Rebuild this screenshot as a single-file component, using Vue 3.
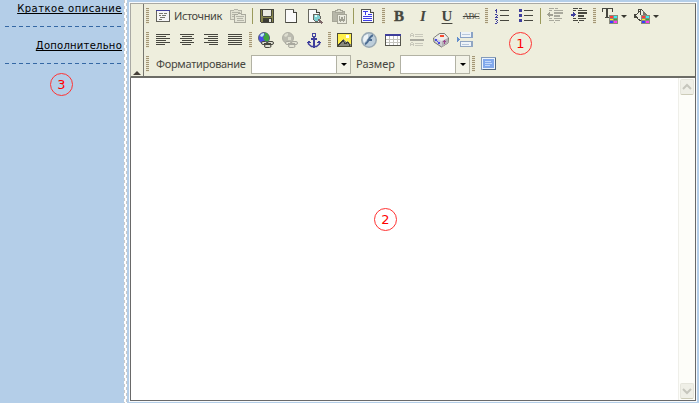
<script setup>
const ink = '#47473f'
const navy = '#3f3f9c'
const pale = '#b4b4a8'

// Each shape is [path data, fill, stroke, stroke width, smooth]
const palette = [
  ['M7 7h9v9h-9z', '#8b8b7d'],
  ['M8 8h3v2h-3z', '#ff3838'], ['M12 8h3v2h-3z', '#35eeee'],
  ['M8 11h3v1h-3z', '#ffed27'], ['M12 11h3v1h-3z', '#38a838'],
  ['M8 13h3v2h-3z', '#3b3bff'], ['M12 13h3v2h-3z', '#ff38ee'],
]

const icons = {
  source: [
    ['M1.5 2.5h13v11h-13z', '#f5f5f6', '#62625a'], ['M1 2.5h14', 'none', navy],
    ['M4 5.5h4M9 5.5h3M4 7.5h2M7 7.5h4M5 9.5h5M4 11.5h3', 'none', '#77776e'],
  ],
  templates: [
    ['M.5 2.5h3l1-1h3l1 1h3v9h-11z', '#e1e1d2', pale], ['M2 4.5h8M2 6.5h3M2 8.5h2', 'none', pale],
    ['M4.5 6.5h3l1-1h2l1 1h4v8h-11z', '#e5e5d7', '#a9a99d'], ['M6 8.5h8M7 10.5h6M7 12.5h7', 'none', pale],
  ],
  save: [
    ['M1.5 1.5h13v13h-12l-1-1z', '#84844b', ink], ['M4 2h8v6h-8z', '#e8e8df'],
    ['M3.5 2v6M12.5 2v6M4 8.5h8', 'none', ink], ['M4 10h9v4h-9z', '#3c3c35'], ['M10 11h2v3h-2z', '#e5e5da'],
  ],
  page: [['M2.5 1.5h8l3 3v10h-11z', '#fafafa', '#67675f'], ['M10.5 1.5v3h3', '#ddd', ink], ['M13.5 5v10M3 14.5h11', 'none', ink]],
  preview: [
    ['M1.5 1.5h8l3 3v10h-11z', '#fafafa', '#67675f'], ['M9.5 1.5v3h3', '#ddd', ink],
    ['M7 6h4l2 2v3l-2 2h-3l-2-2v-3z', '#80cfd1', '#686861'], ['M8 7h2v2h-2z', '#d9ffff'], ['M11.5 11.5l4 4', 'none', '#7d6869', 2],
  ],
  word: [
    ['M1.5 3.5h12v10h-12z', '#b6b6a8', '#a6a698'], ['M4.5 4.5v-2h2v-1h3v1h2v2z', '#dadacb', '#a6a698'],
    ['M6.5 6.5h9v9h-9z', '#ebebdf', '#a6a698'], ['M8.5 8v4l1 1 1.5-3 1.5 3 1-1v-4', 'none', '#a0a093', 1.5],
  ],
  document: [
    ['M1.5 1.5h9l3 3v10h-12z', '#fafaff', '#55554e'], ['M10.5 1.5v3h3', '#ddd', ink],
    ['M3 3.5h5M5.5 3v4M3 8.5h9M3 10.5h9M3 12.5h9', 'none', '#3d3de6'], ['M8 6.5h4', 'none', '#3d3de6'],
  ],
  ol: [
    ['M2 1h1v4h-1zM1 2h1v1h-1zM1 6h2v1h-2zM3 7h1v1h-1zM2 8h1v1h-1zM1 9h3v1h-3zM1 11h2v1h-2zM3 12h1v1h-1zM2 13h1v1h-1zM3 14h1v1h-1zM1 15h2v1h-2z', navy],
    ['M6 2.5h9M6 7.5h9M6 12.5h9', 'none', ink],
  ],
  ul: [['M1 1h3v3h-3zM1 6h3v3h-3zM1 11h3v3h-3z', navy], ['M6 2.5h9M6 7.5h9M6 12.5h9', 'none', ink]],
  outdent: [
    ['M2 .5h5M8 .5h3M2 2.5h3M7 2.5h9M2 10.5h3M7 10.5h8M2 12.5h5M8 12.5h5M7 14.5h1', 'none', '#a9a99d'],
    ['M7 4h9v2h-9zM7 7h6v2h-6z', '#a9a99d'], ['M0 6.5l3-3v2h3v2h-3v2z', '#a0a094'],
  ],
  indent: [
    ['M2 .5h5M8 .5h3M2 2.5h3M7 2.5h9M2 10.5h3M7 10.5h8M2 12.5h5M8 12.5h5M7 14.5h1', 'none', ink],
    ['M7 4h9v2h-9zM7 7h6v2h-6z', ink], ['M5 6.5l-3-3v2h-2v2h2v2z', navy],
  ],
  textColor: [['M.5 4v-3.5h10v3.5M5.5 1v9M3 9.5h5', 'none', ink], ['M4 1h2v9h-2z', ink], ...palette],
  bgColor: [
    ['M1.5 7.5l6-6 5 5-6 6-2-1z', '#eeeedf', ink], ['M4.5 4v-3h2v6', 'none', ink],
    ['M9 3l4 4-4 2z', '#75756c'], ['M0 6h2v4h-2z', ink], ...palette,
  ],
  left: [['M1 2.5h14M1 4.5h10M1 6.5h14M1 8.5h10M1 10.5h14M1 12.5h9', 'none', ink]],
  center: [['M1 2.5h14M3 4.5h10M1 6.5h14M3 8.5h10M1 10.5h14M3 12.5h9', 'none', ink]],
  right: [['M1 2.5h14M5 4.5h10M1 6.5h14M5 8.5h10M1 10.5h14M6 12.5h9', 'none', ink]],
  justify: [['M1 2.5h14M1 4.5h14M1 6.5h14M1 8.5h14M1 10.5h14M1 12.5h14', 'none', ink]],
  link: [
    ['M6 .5a5.5 5.5 0 100 11a5.5 5.5 0 100-11z', '#4b4bea', '#55627e', 1, true],
    ['M6 1h3l2 3v4l-2 2-3-2-1-3 2-2z', '#3fa63e', 'none', 1, true], ['M3 2l3-1v2l-2 2-2-1z', '#bdeef1', 'none', 1, true],
    ['M5 9.5h2.500a1.500 1.500 0 010 3h-2.500a1.500 1.500 0 010-3zM11 9.5h3a1.500 1.500 0 010 3h-3a1.500 1.500 0 010-3zM8 12.500h3.500a1.500 1.500 0 010 3h-3.500a1.500 1.500 0 010-3z', '#deded2', ink, 1, true], ['M6 11.500h7', 'none', ink],
  ],
  unlink: [
    ['M6 .5a5.5 5.5 0 100 11a5.5 5.5 0 100-11z', '#bcbcb1', '#b0b0a5', 1, true],
    ['M3 2l3-1v2l-2 2-2-1zM6 5h3v3h-3z', '#ddddcf', 'none', 1, true],
    ['M5 9.5h2.500a1.500 1.500 0 010 3h-2.500a1.500 1.500 0 010-3zM11 9.5h3a1.500 1.500 0 010 3h-3a1.500 1.500 0 010-3zM8 12.500h3.500a1.500 1.500 0 010 3h-3.500a1.500 1.500 0 010-3z', '#e5e5d7', '#a9a99f', 1, true], ['M6 11.500h7', 'none', '#a9a99f'],
  ],
  anchor: [
    ['M6.500 1.500h3v3h-3z', 'none', '#4545a0'], ['M8 5v9M5 6.5h6', 'none', navy, 2],
    ['M2.500 10v2l3 2.500h5l3-2.500v-2', 'none', navy, 1.5, true],
    ['M1 11l2-3 2 3zM11 11l2-3 2 3zM7 14h2v2h-2z', navy],
  ],
  image: [
    ['M.5 1.5h14v13h-14z', '#fff04c', '#4c4b36'], ['M9 3h3v3h-3z', '#fff'], ['M1 13l5-6 3 3 2-1 3 4v1h-13z', '#88887d'],
    ['M1 13.5l5-5 2 3 3-1 2 3', 'none', '#3e3e39'],
  ],
  flash: [
    ['M8 .8a7.2 7.2 0 100 14.4a7.2 7.2 0 100-14.4z', '#bdcedb', '#98a8b3', 1.5, true],
    ['M3 4l4-2v4l-4 5-1-3z', '#edf3f7', 'none', 1, true],
    ['M12 3.500c-4 0-4.500 8-8 8.500M6.500 8h4.500', 'none', '#4c6c91', 2, true],
  ],
  table: [
    ['M.5 2.5h15v11h-15z', '#fff', '#55554d'], ['M0 3h16', 'none', navy, 2],
    ['M4.5 4v9M8.5 4v9M12.5 4v9M1 7.5h14M1 10.5h14', 'none', '#c3c3bd'],
  ],
  rule: [
    ['M1 7h14v2h-14z', '#aaaaa0'], ['M2 1.5h2M1.500 2v3M4.500 2v3M2 3.5h2M6 2.5h8M6 4.5h8M2 10.5h2M1.500 11v3M4.500 11v3M2 12.5h2M6 11.5h8M6 13.5h8', 'none', '#c8c8bb'],
  ],
  smiley: [
    ['M.5 6l6-4.500h5l4 4.500-.5 5-6.500 4-7.500-5z', '#cdced4', '#77776f', 1, true],
    ['M1 6l6-4h4l4 4-6 3z', '#ededea', 'none', 1, true], ['M9 9l6-3v5l-6 4z', '#b5b1b6', 'none', 1, true],
    ['M7 3h4v2h-4z', '#f74a2e'], ['M2 7h2v2h-2zM4 9h1v1h-1zM5 10h2v2h-2z', '#4a4ae8'], ['M11 8h1v1h1v1h-1v2h-1v-2h-1v-1h1z', '#9b438b'],
  ],
  pageBreak: [
    ['M3 0h13v6h-13z', '#8ba3c6'], ['M4 0h10v5h-10z', '#eef3f8'], ['M3 9h13v6h-13z', '#91a6c3'], ['M4 10h10v4h-10z', '#eff4f8'],
    ['M5 2.5h8M5 12.5h7', 'none', '#b8c8dc'], ['M0 4.500l3 3-3 3z', '#638ecc'],
  ],
  fit: [
    ['M.5 1.5h14v12h-14z', '#ecf4fd', '#849bba'], ['M14.5 2v11.500h-13', 'none', '#52677f'], ['M2 3h11v9h-11z', '#82a9ec'],
    ['M4 5.5h6M4 7.5h7M4 9.5h5', 'none', '#c2d8fb'],
  ],
}

const b = (icon) => ({ kind: 'button', icon })
const handle = { kind: 'handle' }
const sep = { kind: 'sep' }
const rows = [
  [handle, { kind: 'source', icon: 'source', text: 'Источник' }, b('templates'), sep, b('save'), b('page'), b('preview'), b('word'), sep, b('document'),
    handle, { kind: 'glyph', text: 'B', style: 'bold' }, { kind: 'glyph', text: 'I', style: 'italic' }, { kind: 'glyph', text: 'U', style: 'under' }, { kind: 'glyph', text: 'ABC', style: 'strike' },
    handle, b('ol'), b('ul'), sep, b('outdent'), b('indent'),
    handle, { kind: 'color', icon: 'textColor' }, { kind: 'color', icon: 'bgColor' }],
  [handle, b('left'), b('center'), b('right'), b('justify'), handle, b('link'), b('unlink'), b('anchor'),
    handle, b('image'), b('flash'), b('table'), b('rule'), b('smiley'), b('pageBreak')],
  [handle, { kind: 'select', text: 'Форматирование', style: 'format' }, { kind: 'select', text: 'Размер', style: 'size' }, handle, b('fit')],
]
</script>

<template>
  <div class="page">
    <aside class="sidebar">
      <a class="link first">Краткое описание</a>
      <a class="link second">Дополнительно</a>
      <span class="mark mark-side">3</span>
    </aside>
    <div class="splitter"></div>
    <main class="editor">
      <header class="toolbar">
        <div class="collapse"><i></i></div>
        <div class="rows">
          <div v-for="(row, n) in rows" :key="n" class="row">
            <div v-for="(item, i) in row" :key="i" class="item" :class="[item.kind, item.style]">
              <span v-if="item.text" class="label">{{ item.text }}</span>
              <svg v-if="item.icon" class="icon" width="16" height="16" viewBox="0 0 16 16">
                <path v-for="(s, k) in icons[item.icon]" :key="k" :d="s[0]" :fill="s[1]" :stroke="s[2] || 'none'"
                  :stroke-width="s[3] || 1" :shape-rendering="s[4] ? 'auto' : 'crispEdges'" />
              </svg>
              <i v-if="item.kind === 'color'" class="arrow"></i>
              <div v-if="item.kind === 'select'" class="box"><span class="drop"><i class="arrow"></i></span></div>
            </div>
          </div>
        </div>
        <span class="mark mark-tools">1</span>
      </header>
      <section class="area">
        <span class="mark mark-area">2</span>
        <div class="scroll">
          <div class="scroll-button"><svg width="10" height="8" viewBox="0 0 10 8"><path d="M1 6l4-4 4 4" /></svg></div>
          <div class="scroll-button down"><svg width="10" height="8" viewBox="0 0 10 8"><path d="M1 2l4 4 4-4" /></svg></div>
        </div>
      </section>
    </main>
  </div>
</template>

<style>
body { margin: 0; overflow: hidden; }
</style>

<style scoped>
* { box-sizing: border-box; }
.page { display: flex; width: 699px; height: 403px; background: #b4cee8; font-family: "DejaVu Sans", sans-serif; position: relative; }
.sidebar { width: 124px; padding: 0 2px 0 5px; }
.link { display: block; width: 117px; text-align: right; color: #000; text-decoration: underline; text-decoration-skip-ink: none; font-size: 10px; line-height: 14px; white-space: nowrap; background: repeating-linear-gradient(90deg, #3568a4 0 4px, transparent 4px 7px) bottom / 100% 1px no-repeat; }
.first { height: 27px; padding-top: 2px; letter-spacing: 0.5px; }
.second { height: 37px; padding-top: 12px; letter-spacing: 0.25px; }
.splitter { width: 3px; background: repeating-conic-gradient(#fff 0 25%, #c9c9c9 0 50%) 0 0 / 3px 6px; }
.editor { display: flex; flex-direction: column; width: 568px; height: 400px; margin: 2px 0 0 2px; border: 1px solid #f8fafc; }
.toolbar { display: flex; height: 75px; flex: none; background: #eeeedd; border: 1px solid #a9a9a3; border-right: 1px solid #62625e; border-bottom: 2px solid #6c6c66; }
.collapse { display: flex; width: 13px; justify-content: center; align-items: flex-end; padding-bottom: 1px; border-right: 1px solid #777770; }
.collapse i { border: 4px solid transparent; border-top: 0; border-bottom: 4px solid #47413a; }
.row { display: flex; height: 24px; }
.item { display: flex; align-items: center; flex: none; }
.button, .glyph { width: 24px; justify-content: center; }
.handle { width: 7px; justify-content: center; }
.handle::before { content: ""; width: 3px; height: 16px; background: repeating-linear-gradient(#a39676 0 1px, #e9e6cf 1px 2px); }
.sep { width: 5px; justify-content: center; }
.sep::before { content: ""; width: 1px; height: 16px; background: #9a9a5c; }
.icon { display: block; overflow: visible; }
.source { width: 75px; padding-left: 4px; gap: 3px; }
.source .label { order: 1; letter-spacing: -0.4px; }
.label { font-family: "Noto Sans", "DejaVu Sans", sans-serif; font-size: 11px; line-height: 16px; color: #47473f; white-space: nowrap; }
.glyph .label { font-family: "Liberation Serif", serif; font-size: 15px; line-height: 16px; }
.bold .label { font-weight: bold; -webkit-text-stroke: 0.4px #47473f; }
.italic .label { font-style: italic; font-weight: bold; }
.under .label { font-weight: bold; text-decoration: underline; text-underline-offset: 2px; }
.strike .label { font-size: 9px; letter-spacing: -0.7px; text-decoration: line-through; }
.color { width: 32px; padding-left: 4px; gap: 3px; }
.arrow { width: 0; height: 0; border: 3px solid transparent; border-top-color: #393932; border-bottom: 0; }
.select { gap: 5px; padding-left: 5px; }
.format { width: 200px; }
.size { width: 119px; }
.select .label { flex: 1 1 0; min-width: 0; }
.format .label { letter-spacing: -0.3px; }
.box { display: flex; flex: none; justify-content: flex-end; width: 100px; height: 19px; border: 1px solid #b2b2a4; background: #fff; }
.size .box { width: 70px; }
.drop { display: flex; align-items: center; justify-content: center; width: 14px; border-left: 1px solid #b2b2a4; background: #f3f3e8; }
.drop .arrow { border-top-color: #000; }
.area { display: flex; flex: 1; justify-content: flex-end; background: #fff; border: 1px solid #696969; border-top: 0; }
.scroll { display: flex; flex-direction: column; justify-content: space-between; width: 17px; padding: 1px; border-left: 1px solid #efefe9; background: #fdfdf9; }
.scroll-button { display: flex; align-items: center; justify-content: center; width: 14px; height: 16px; border: 1px solid #e5e5dc; border-bottom-color: #cdccb9; border-radius: 2px; background: #efefe7; }
.scroll-button path { fill: none; stroke: #c6c6bd; stroke-width: 2; }
.mark { position: absolute; display: flex; align-items: center; justify-content: center; width: 23px; height: 23px; border: 1px solid #f33; border-radius: 50%; color: #f00; font-size: 13px; line-height: 20px; }
.mark-side { left: 50px; top: 73px; }
.mark-tools { left: 509px; top: 32px; }
.mark-area { left: 374px; top: 208px; }
</style>
